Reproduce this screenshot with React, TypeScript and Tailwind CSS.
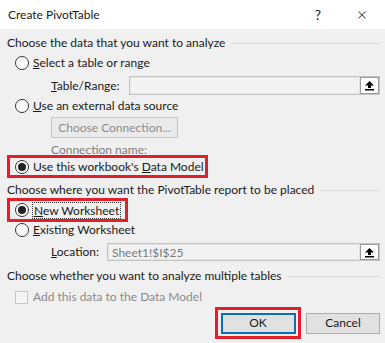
import React from "react";

function Radio({ checked = false }: { checked?: boolean }) {
  return (
    <span className="w-[14px] h-[14px] rounded-full border border-[#333] bg-white flex items-center justify-center shrink-0">
      {checked && <span className="w-[8px] h-[8px] rounded-full bg-[#222]" />}
    </span>
  );
}

function Header({ text }: { text: string }) {
  return (
    <div className="h-[18px] flex items-center gap-[6px]">
      <span className="whitespace-nowrap">{text}</span>
      <span className="flex-1 h-px bg-[#d9d9d9]" />
    </div>
  );
}

function UpButton() {
  return (
    <span className="w-[19px] h-full bg-white border border-[#9a9a9a] flex items-center justify-center shrink-0">
      <svg width="11" height="11" viewBox="0 0 11 11">
        <path d="M5.5 1 L10 5.5 H7 V8 H4 V5.5 H1 Z" fill="#000" />
        <rect x="1" y="9" width="9" height="1.5" fill="#000" />
      </svg>
    </span>
  );
}

function RangeInput({ value }: { value?: string }) {
  return (
    <div className="flex-1 h-full flex border border-[#c4c4c4]">
      <span className="flex-1 bg-[#f3f3f3] border border-[#e4e4e4] text-[#7a7a7a] pl-[3px] leading-[15px] whitespace-nowrap">
        {value}
      </span>
      <UpButton />
    </div>
  );
}

export default function App() {
  return (
    <div className="w-[385px] h-[343px] bg-[#f0f0f0] text-[12px] text-[#1a1a1a] font-['Lato',sans-serif] overflow-hidden whitespace-nowrap">
      <div className="h-[29px] bg-white flex items-center pl-[8px]">
        <span className="flex-1">Create PivotTable</span>
        <span className="w-[20px] mr-[11px] text-center text-[14px]">?</span>
        <span className="w-[46px] text-center text-[18px] font-light">×</span>
      </div>

      <div className="px-[7px] pr-[5px]">
        <div className="mt-[5px]">
          <Header text="Choose the data that you want to analyze" />
        </div>

        <div className="mt-[2px] h-[18px] flex items-center gap-[4px] pl-[8px]">
          <Radio />
          <span><u>S</u>elect a table or range</span>
        </div>

        <div className="mt-[4px] h-[19px] flex items-center pl-[44px]">
          <span className="w-[78px]"><u>T</u>able/Range:</span>
          <RangeInput />
        </div>

        <div className="mt-[2px] h-[18px] flex items-center gap-[4px] pl-[8px]">
          <Radio />
          <span><u>U</u>se an external data source</span>
        </div>

        <div className="mt-[2px] pl-[44px]">
          <div className="w-[127px] h-[21px] border border-[#c6c6c6] bg-[#eaeaea] text-[#8a8a8a] flex items-center justify-center">
            Choose Connection...
          </div>
        </div>

        <div className="mt-[4px] h-[16px] pl-[44px] text-[#7d7d7d] leading-[16px]">
          Connection name:
        </div>

        <div className="mt-[-3px] w-[201px] h-[23px] border-[3px] border-[#e0202a] flex items-center gap-[4px] pl-[5px]">
          <Radio checked />
          <span>Use this workbook's <u>D</u>ata Model</span>
        </div>

        <div className="mt-[3px]">
          <Header text="Choose where you want the PivotTable report to be placed" />
        </div>

        <div className="mt-[-1px] w-[121px] h-[24px] border-[3px] border-[#e0202a] flex items-center gap-[3px] pl-[5px]">
          <Radio checked />
          <span className="border border-dotted border-[#333] leading-[15px] px-[1px]"><u>N</u>ew Worksheet</span>
        </div>

        <div className="mt-[-1px] h-[18px] flex items-center gap-[4px] pl-[8px]">
          <Radio />
          <span><u>E</u>xisting Worksheet</span>
        </div>

        <div className="mt-[4px] h-[18px] flex items-center pl-[44px]">
          <span className="w-[56px]"><u>L</u>ocation:</span>
          <RangeInput value="Sheet1!$I$25" />
        </div>

        <div className="mt-[6px]">
          <Header text="Choose whether you want to analyze multiple tables" />
        </div>

        <div className="mt-[3px] h-[18px] flex items-center gap-[5px] pl-[8px] text-[#8a8a8a]">
          <span className="w-[13px] h-[13px] border border-[#c8c8c8] bg-[#f4f4f4] shrink-0" />
          <span>Add this data to the Data Model</span>
        </div>

        <div className="mt-[1px] flex justify-end items-center gap-[5px]">
          <div className="w-[86px] h-[32px] border-[3px] border-[#e0202a] flex items-center justify-center">
            <div className="w-[75px] h-[21px] border-2 border-[#0a6ebd] bg-[#e1e1e1] flex items-center justify-center">
              OK
            </div>
          </div>
          <div className="w-[74px] h-[21px] border border-[#adadad] bg-[#e1e1e1] flex items-center justify-center">
            Cancel
          </div>
        </div>
      </div>
    </div>
  );
}
